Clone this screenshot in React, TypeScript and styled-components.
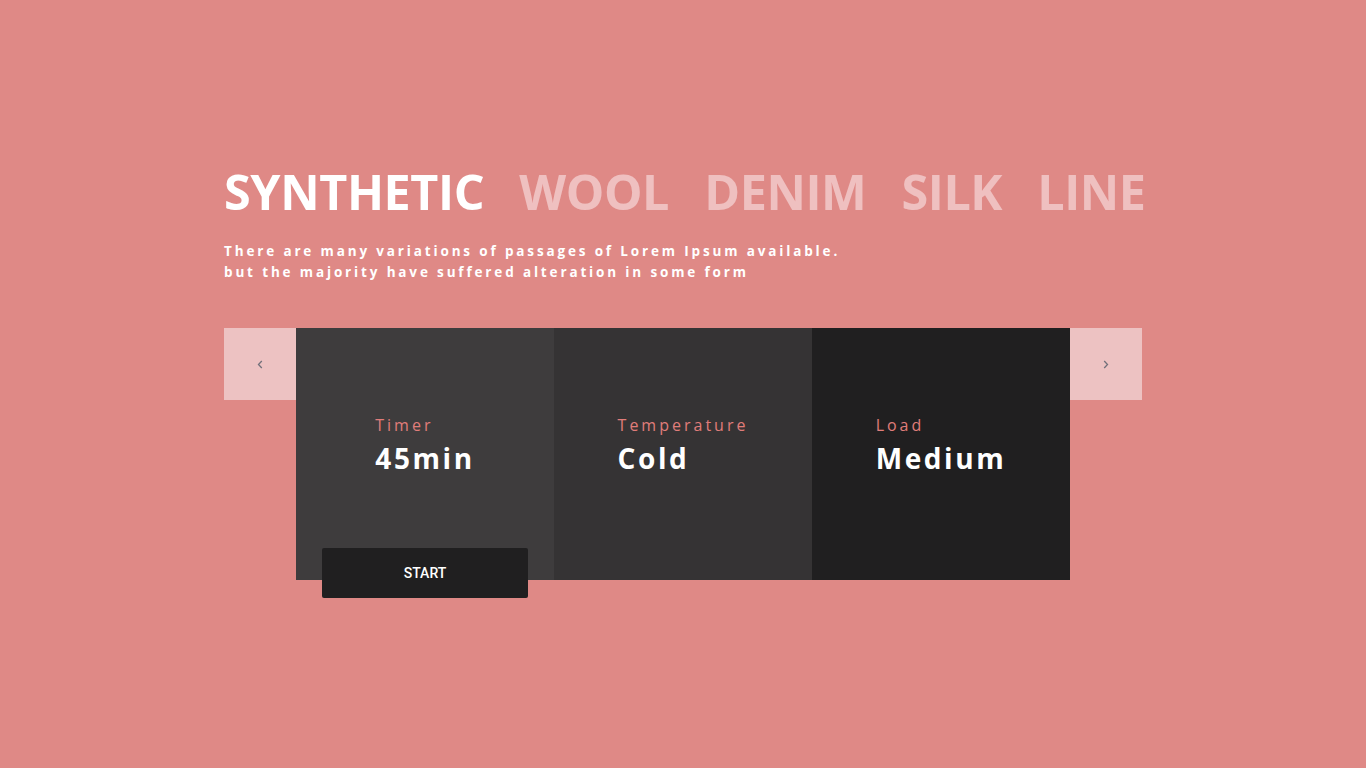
import React from "react";
import styled, { createGlobalStyle } from "styled-components";

const Global = createGlobalStyle`
  html, body { margin: 0; padding: 0; background: #df8986; }
  body { font-family: "Open Sans", "DejaVu Sans", sans-serif; min-height: 768px; }
  #root { min-height: 768px; }
`;

const Page = styled.div`
  width: 918px;
  margin: 0 auto;
  padding-top: 161px;
`;

const Tabs = styled.div`
  display: flex;
  gap: 35px;
`;

const Tab = styled.span<{ $active?: boolean }>`
  font-family: "Open Sans", sans-serif;
  font-weight: 700;
  font-size: 48.5px;
  line-height: 60px;
  letter-spacing: -0.4px;
  color: ${(p) => (p.$active ? "#ffffff" : "#efc0c0")};
`;

const Sub = styled.p`
  margin: 20px 0 0;
  font-family: "Open Sans", sans-serif;
  font-weight: 700;
  font-size: 13.5px;
  line-height: 21px;
  letter-spacing: 2.85px;
  color: #ffffff;
`;

const Carousel = styled.div`
  display: flex;
  align-items: flex-start;
  margin-top: 45px;
`;

const Arrow = styled.button`
  width: 72px;
  height: 72px;
  border: 0;
  padding: 0;
  background: #edc2c2;
  display: flex;
  align-items: center;
  justify-content: center;
  cursor: pointer;
`;

const Card = styled.div<{ $bg: string }>`
  position: relative;
  width: 258px;
  height: 252px;
  background: ${(p) => p.$bg};
  display: flex;
  justify-content: center;
  align-items: flex-start;
  padding-top: 86px;
  box-sizing: border-box;
`;

const Info = styled.div`
  display: flex;
  flex-direction: column;
`;

const Label = styled.span`
  font-family: "Open Sans", sans-serif;
  font-size: 16px;
  line-height: 22px;
  letter-spacing: 3px;
  color: #e07d7a;
`;

const Value = styled.span`
  margin-top: 4px;
  font-family: "Open Sans", sans-serif;
  font-weight: 700;
  font-size: 28px;
  line-height: 36px;
  letter-spacing: 2.6px;
  color: #ffffff;
`;

const Start = styled.button`
  position: absolute;
  left: 26px;
  right: 26px;
  bottom: -18px;
  height: 50px;
  border: 0;
  border-radius: 2px;
  background: #201f20;
  color: #ffffff;
  font-family: Roboto, sans-serif;
  font-weight: 500;
  font-size: 14px;
  cursor: pointer;
`;

const Chevron = ({ dir }: { dir: "left" | "right" }) => (
  <svg width="6" height="9" viewBox="0 0 6 9">
    <path
      d={dir === "left" ? "M4.8 1 L1.5 4.5 L4.8 8" : "M1.2 1 L4.5 4.5 L1.2 8"}
      fill="none"
      stroke="#72707a"
      strokeWidth="1.3"
    />
  </svg>
);

const cards = [
  { label: "Timer", value: "45min", bg: "#3e3c3d", start: true },
  { label: "Temperature", value: "Cold", bg: "#353334" },
  { label: "Load", value: "Medium", bg: "#201f20" },
];

export default function App() {
  return (
    <>
      <Global />
      <Page>
        <Tabs>
          <Tab $active>SYNTHETIC</Tab>
          <Tab>WOOL</Tab>
          <Tab>DENIM</Tab>
          <Tab>SILK</Tab>
          <Tab>LINE</Tab>
        </Tabs>
        <Sub>
          There are many variations of passages of Lorem Ipsum available.
          <br />
          but the majority have suffered alteration in some form
        </Sub>
        <Carousel>
          <Arrow aria-label="previous">
            <Chevron dir="left" />
          </Arrow>
          {cards.map((c) => (
            <Card key={c.label} $bg={c.bg}>
              <Info>
                <Label>{c.label}</Label>
                <Value>{c.value}</Value>
              </Info>
              {c.start && <Start>START</Start>}
            </Card>
          ))}
          <Arrow aria-label="next">
            <Chevron dir="right" />
          </Arrow>
        </Carousel>
      </Page>
    </>
  );
}
